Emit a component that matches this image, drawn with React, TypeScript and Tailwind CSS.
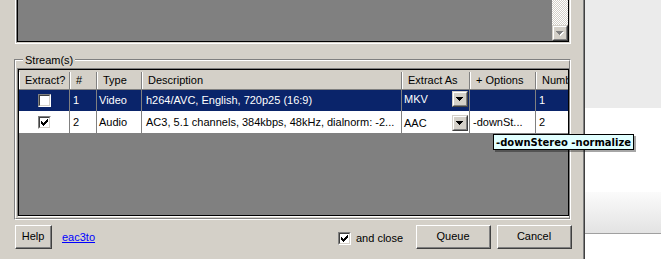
import React from 'react';

const columns = [
  { label: 'Extract?', w: 'w-[51px]' },
  { label: '#', w: 'w-[27px]' },
  { label: 'Type', w: 'w-[45px]' },
  { label: 'Description', w: 'w-[260px]' },
  { label: 'Extract As', w: 'w-[68px]' },
  { label: '+ Options', w: 'w-[66px]' },
  { label: 'Number', w: 'w-[60px]' },
];

function CheckBox({ checked }: { checked: boolean }) {
  return (
    <div className="w-[13px] h-[13px] shrink-0 border border-t-[#808080] border-l-[#808080] border-b-white border-r-white">
      <div className="w-full h-full border border-t-[#404040] border-l-[#404040] border-b-[#d4d0c8] border-r-[#d4d0c8] bg-white">
        {checked && (
          <svg width="9" height="9" viewBox="0 0 9 9" shapeRendering="crispEdges" className="block">
            <rect x="1" y="3" width="1" height="3" fill="#000" />
            <rect x="2" y="4" width="1" height="3" fill="#000" />
            <rect x="3" y="5" width="1" height="3" fill="#000" />
            <rect x="4" y="4" width="1" height="3" fill="#000" />
            <rect x="5" y="3" width="1" height="3" fill="#000" />
            <rect x="6" y="2" width="1" height="3" fill="#000" />
            <rect x="7" y="1" width="1" height="3" fill="#000" />
          </svg>
        )}
      </div>
    </div>
  );
}

function DownArrow({ disabled }: { disabled?: boolean }) {
  return (
    <svg width="8" height="5" viewBox="0 0 8 5" shapeRendering="crispEdges" className="block">
      {disabled && <path d="M1 1h7v1H1z M2 2h5v1H2z M3 3h3v1H3z M4 4h1v1H4z" fill="#ffffff" />}
      <path d="M0 0h7v1H0z M1 1h5v1H1z M2 2h3v1H2z M3 3h1v1H3z" fill={disabled ? '#808080' : '#000000'} />
    </svg>
  );
}

function SmallButton({ disabled }: { disabled?: boolean }) {
  return (
    <div className="w-[16px] h-[16px] shrink-0 border border-t-[#d4d0c8] border-l-[#d4d0c8] border-b-[#404040] border-r-[#404040] bg-[#d4d0c8]">
      <div className="w-full h-full flex items-center justify-center border border-t-white border-l-white border-b-[#808080] border-r-[#808080]">
        <DownArrow disabled={disabled} />
      </div>
    </div>
  );
}

function Button({ label, w }: { label: string; w: string }) {
  return (
    <div className={`${w} h-[24px] shrink-0 border border-t-white border-l-white border-b-[#404040] border-r-[#404040]`}>
      <div className="w-full h-full flex items-center justify-center border-b border-r border-b-[#808080] border-r-[#808080] text-black">
        {label}
      </div>
    </div>
  );
}

function Row({
  selected,
  checked,
  num,
  type,
  desc,
  format,
  options,
  h,
  comboPad,
}: {
  selected: boolean;
  checked: boolean;
  num: string;
  type: string;
  desc: string;
  format: string;
  options: string;
  h: string;
  comboPad: string;
}) {
  const bg = selected ? 'bg-[#0a246a] text-white' : 'bg-white text-black';
  return (
    <div className={`flex shrink-0 ${h} ${bg} whitespace-nowrap`}>
      <div className="w-[51px] shrink-0 flex items-center justify-center border-r border-r-[#808080]">
        <CheckBox checked={checked} />
      </div>
      <div className="w-[27px] shrink-0 flex items-center pl-[3px] border-r border-r-[#808080]">{num}</div>
      <div className="w-[45px] shrink-0 flex items-center pl-[2px] border-r border-r-[#808080]">{type}</div>
      <div className="w-[260px] shrink-0 flex items-center pl-[4px] border-r border-r-[#808080] overflow-hidden">{desc}</div>
      <div className={`w-[68px] shrink-0 flex items-start ${comboPad} border-r border-r-[#808080]`}>
        <div className="flex-1 flex items-center h-[16px] pl-[2px]">{format}</div>
        <div className="mr-[1px]">
          <SmallButton />
        </div>
      </div>
      <div className="w-[66px] shrink-0 flex items-center pl-[3px] border-r border-r-[#808080] overflow-hidden">{options}</div>
      <div className="w-[60px] shrink-0 flex items-center pl-[3px]">{num}</div>
    </div>
  );
}

export default function App() {
  return (
    <div className="relative w-[661px] h-[259px] flex overflow-hidden font-['Liberation_Sans',Arial,sans-serif] text-[11px] leading-[13px] text-black">
      {/* dialog */}
      <div className="w-[585px] h-full border-r border-r-[#404040] bg-[#d4d0c8]">
        <div className="h-full flex flex-col border-r border-r-[#808080]">
          {/* upper list, scrolled away */}
          <div className="ml-[15px] w-[556px] h-[44px] shrink-0 border-l border-r border-b border-white">
            <div className="h-full border-l border-r border-b border-l-[#808080] border-r-[#d4d0c8] border-b-[#d4d0c8]">
              <div className="h-full flex border-l border-r border-b border-black bg-[#808080]">
                <div className="flex-1" />
                <div className="w-[16px] flex flex-col bg-[image:repeating-conic-gradient(#d4d0c8_0%_25%,#ffffff_0%_50%)] [background-size:2px_2px]">
                  <div className="flex-1" />
                  <SmallButton disabled />
                </div>
              </div>
            </div>
          </div>

          {/* Stream(s) group */}
          <div className="relative shrink-0 mt-[15px] ml-[14px] w-[557px] h-[161px] border border-t-[#808080] border-l-[#808080] border-b-white border-r-white">
            <span className="absolute left-[8px] top-[-6px] px-[2px] bg-[#d4d0c8]">Stream(s)</span>
            <div className="h-full border border-t-white border-l-white border-b-[#808080] border-r-[#808080] pt-[7px] pl-[1px]">
              <div className="h-[149px] border-t border-l border-b border-t-[#808080] border-l-[#808080] border-b-white">
                <div className="h-full border border-black bg-[#808080] flex flex-col overflow-hidden">
                  <div className="flex shrink-0 h-[20px] pt-[2px] bg-[#d4d0c8] border-b border-b-[#808080] whitespace-nowrap">
                    {columns.map((c) => (
                      <div
                        key={c.label}
                        className={`${c.w} shrink-0 flex items-center pl-[5px] border-l border-r border-l-white border-r-[#808080] overflow-hidden`}
                      >
                        {c.label}
                      </div>
                    ))}
                  </div>
                  <Row
                    selected
                    checked={false}
                    num="1"
                    type="Video"
                    desc="h264/AVC, English, 720p25 (16:9)"
                    format="MKV"
                    options=""
                    h="h-[21px]"
                    comboPad="pt-[1px]"
                  />
                  <Row
                    selected={false}
                    checked
                    num="2"
                    type="Audio"
                    desc="AC3, 5.1 channels, 384kbps, 48kHz, dialnorm: -2..."
                    format="AAC"
                    options="-downSt..."
                    h="h-[22px]"
                    comboPad="pt-[4px]"
                  />
                </div>
              </div>
            </div>
          </div>

          {/* bottom buttons */}
          <div className="mt-[5px] flex items-center pl-[15px] pr-[11px]">
            <Button label="Help" w="w-[37px]" />
            <span className="ml-[10px] text-[#0000ff] underline">eac3to</span>
            <div className="ml-auto w-[78px] flex items-center gap-[5px] pt-[3px]">
              <CheckBox checked />
              <span>and close</span>
            </div>
            <Button label="Queue" w="w-[75px]" />
            <div className="ml-[6px]">
              <Button label="Cancel" w="w-[75px]" />
            </div>
          </div>
        </div>
      </div>

      {/* window behind */}
      <div className="flex-1 flex flex-col">
        <div className="h-[108px] bg-[#ebebeb]" />
        <div className="h-[84px] bg-white" />
        <div className="h-[41px] bg-gradient-to-b from-[#fbfbfb] to-[#e3e3e3]" />
        <div className="h-px bg-[#a0a0a0]" />
        <div className="flex-1 bg-white" />
      </div>

      {/* tooltip */}
      <div className="absolute left-[493px] top-[134px] h-[16px] px-[2px] flex items-center bg-[#e1ffff] border border-black shadow-[2px_2px_0_rgba(0,0,0,0.35)] font-['DejaVu_Sans',Verdana,sans-serif] font-bold text-[10px] whitespace-nowrap">
        -downStereo -normalize
      </div>
    </div>
  );
}
